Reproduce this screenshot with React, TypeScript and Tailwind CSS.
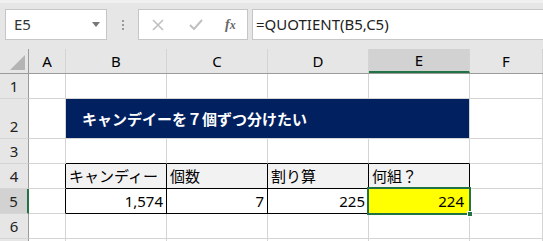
import React from "react";

const COLS = ["A", "B", "C", "D", "E", "F"];
const WIDTHS = ["w-[37px]", "w-[101px]", "w-[101px]", "w-[101px]", "w-[101px]", "flex-1"];
const FONT = { fontFamily: '"Noto Sans", "Noto Sans CJK JP", sans-serif' };

type CellProps = {
  w: string;
  h: string;
  right?: boolean;
  bottom?: boolean;
  className?: string;
  children?: React.ReactNode;
};

// one grid cell, light grey lines unless the table edge is black
function Cell({ w, h, right, bottom, className = "", children }: CellProps) {
  return (
    <div
      className={`${w} ${h} shrink-0 border-r border-b flex items-center ${
        right ? "border-r-black" : "border-r-[#d4d4d4]"
      } ${bottom ? "border-b-black" : "border-b-[#d4d4d4]"} ${className}`}
    >
      {children}
    </div>
  );
}

function RowHead({ n, h, active }: { n?: number; h: string; active?: boolean }) {
  return (
    <div
      className={`w-[29px] ${h} shrink-0 border-b border-b-[#d4d4d4] flex items-end justify-center pb-[1px] text-[15px] text-[#222] ${
        active ? "bg-[#d2d2d2] border-r-2 border-r-[#217346]" : "bg-[#e6e6e6] border-r border-r-[#9b9b9b]"
      }`}
    >
      {n}
    </div>
  );
}

export default function App() {
  return (
    <div className="w-[543px] h-[241px] overflow-hidden bg-[#e6e6e6] text-black" style={FONT}>
      {/* formula bar */}
      <div className="h-[49px] flex items-start pt-[9px] border-t-[3px] border-t-[#f0f0f0]">
        <div className="ml-[5px] w-[102px] h-[31px] -mt-[3px] bg-white border border-[#c6c6c6] flex items-center justify-between pl-[8px] pr-[6px]">
          <span className="text-[15px] text-[#333]">E5</span>
          <svg width="8" height="5" viewBox="0 0 8 5">
            <path d="M0 0h8L4 5z" fill="#777" />
          </svg>
        </div>
        <div className="w-[31px] h-[31px] -mt-[3px] flex flex-col items-center justify-center gap-[2px]">
          <span className="w-[2px] h-[2px] bg-[#9a9a9a]" />
          <span className="w-[2px] h-[2px] bg-[#9a9a9a]" />
          <span className="w-[2px] h-[2px] bg-[#9a9a9a]" />
        </div>
        <div className="w-[110px] h-[31px] -mt-[3px] bg-white border border-[#c6c6c6] flex items-center pl-[12px]">
          <svg width="12" height="12" viewBox="0 0 12 12" className="ml-[1px]">
            <path d="M1 1l10 10M11 1L1 11" stroke="#c0c0c0" strokeWidth="1.6" />
          </svg>
          <svg width="14" height="11" viewBox="0 0 14 11" className="ml-[25px]">
            <path d="M1 6l4 4L13 1" stroke="#c0c0c0" strokeWidth="2" fill="none" />
          </svg>
          <span
            className="ml-[22px] italic font-bold text-[14px] text-[#666]"
            style={{ fontFamily: '"Liberation Serif", serif' }}
          >
            f<span className="text-[12px]">x</span>
          </span>
        </div>
        <div className="ml-[4px] flex-1 h-[31px] -mt-[3px] bg-white border-y border-l border-[#c6c6c6] flex items-center pl-[3px] text-[15px] text-[#222]">
          =QUOTIENT(B5,C5)
        </div>
      </div>

      {/* column headers */}
      <div className="flex h-[25px] border-b border-b-[#9b9b9b]">
        <div className="w-[29px] shrink-0 border-r border-r-[#9b9b9b] flex items-end justify-end p-[3px]">
          <svg width="15" height="15" viewBox="0 0 15 15">
            <path d="M15 0V15H0z" fill="#b4b4b4" />
          </svg>
        </div>
        {COLS.map((c, i) => (
          <div
            key={c}
            className={`${WIDTHS[i]} shrink-0 border-r border-r-[#d4d4d4] flex items-center justify-center text-[15px] ${
              c === "E" ? "bg-[#d2d2d2] border-b-2 border-b-[#217346]" : ""
            }`}
          >
            {c}
          </div>
        ))}
      </div>

      <div className="bg-white">
        {/* row 1 */}
        <div className="flex">
          <RowHead n={1} h="h-[25px]" />
          {WIDTHS.map((w, i) => (
            <Cell key={i} w={w} h="h-[25px]" />
          ))}
        </div>

        {/* row 2 */}
        <div className="flex">
          <RowHead n={2} h="h-[40px]" />
          <Cell w={WIDTHS[0]} h="h-[40px]" />
          <div className="w-[404px] h-[40px] shrink-0 bg-[#002060] border-b border-b-[#d4d4d4] border-r border-r-[#d4d4d4] flex items-center pl-[16px] pt-[1px] text-white font-bold text-[15px]">
            キャンデイーを７個ずつ分けたい
          </div>
          <Cell w={WIDTHS[5]} h="h-[40px]" />
        </div>

        {/* row 3 */}
        <div className="flex">
          <RowHead n={3} h="h-[25px]" />
          <Cell w={WIDTHS[0]} h="h-[25px]" />
          {[1, 2, 3, 4].map((i) => (
            <Cell key={i} w={WIDTHS[i]} h="h-[25px]" bottom />
          ))}
          <Cell w={WIDTHS[5]} h="h-[25px]" />
        </div>

        {/* row 4 */}
        <div className="flex">
          <RowHead n={4} h="h-[25px]" />
          <Cell w={WIDTHS[0]} h="h-[25px]" right />
          {["キャンディー", "個数", "割り算", "何組？"].map((t, i) => (
            <Cell key={t} w={WIDTHS[i + 1]} h="h-[25px]" right bottom className="bg-[#f2f2f2] pl-[3px] text-[15px]">
              {t}
            </Cell>
          ))}
          <Cell w={WIDTHS[5]} h="h-[25px]" />
        </div>

        {/* row 5 */}
        <div className="flex">
          <RowHead n={5} h="h-[25px]" active />
          <Cell w={WIDTHS[0]} h="h-[25px]" right />
          {["1,574", "7", "225"].map((t, i) => (
            <Cell key={t} w={WIDTHS[i + 1]} h="h-[25px]" right bottom className="justify-end pr-[3px] text-[15px]">
              {t}
            </Cell>
          ))}
          <Cell w={WIDTHS[4]} h="h-[25px]" right bottom className="relative bg-[#ffff00] justify-end pr-[5px] text-[15px]">
            224
            <div className="absolute -left-[2px] -top-[2px] -right-[2px] -bottom-[2px] border-2 border-[#217346]" />
            <div className="absolute -right-[4px] -bottom-[4px] w-[6px] h-[6px] bg-[#217346] border border-white" />
          </Cell>
          <Cell w={WIDTHS[5]} h="h-[25px]" />
        </div>

        {/* row 6 and the top of row 7 */}
        <div className="flex">
          <RowHead n={6} h="h-[25px]" />
          {WIDTHS.map((w, i) => (
            <Cell key={i} w={w} h="h-[25px]" />
          ))}
        </div>
        <div className="flex">
          <RowHead h="h-[25px]" />
          {WIDTHS.map((w, i) => (
            <Cell key={i} w={w} h="h-[25px]" />
          ))}
        </div>
      </div>
    </div>
  );
}
